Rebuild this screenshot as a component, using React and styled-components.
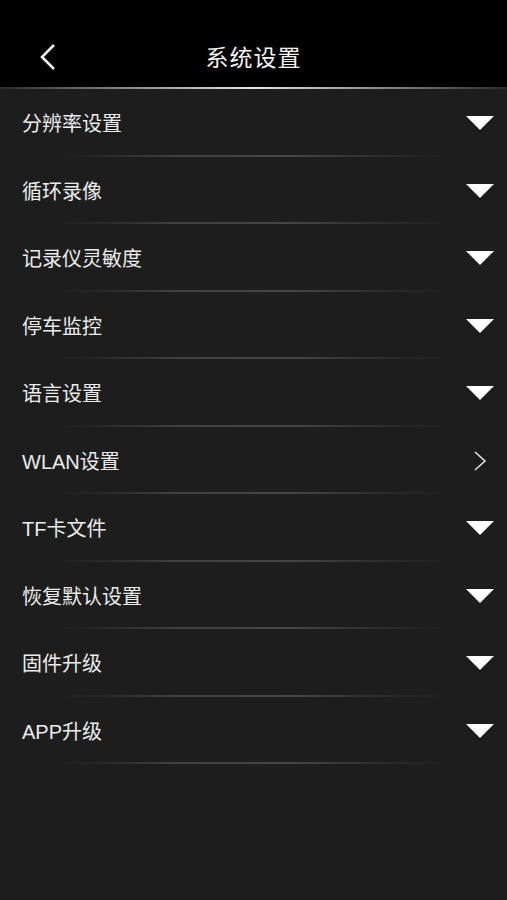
import React from "react";
import styled, { createGlobalStyle } from "styled-components";

const GlobalStyle = createGlobalStyle`
  html, body {
    margin: 0;
    padding: 0;
    background: #1d1d1d;
  }
  body {
    font-family: "Noto Sans CJK SC", "Liberation Sans", sans-serif;
  }
`;

const Page = styled.div`
  width: 507px;
  min-height: 900px;
  background: #1d1d1d;
  display: flex;
  flex-direction: column;
`;

const Header = styled.header`
  height: 87px;
  background: #000;
  display: flex;
  align-items: center;
  justify-content: center;
  position: relative;
  padding-top: 26px;
  box-sizing: border-box;
`;

const Glow = styled.div`
  height: 2px;
  background: linear-gradient(
    to right,
    #2a2a2a 0%,
    #777 20%,
    #e6e6e6 50%,
    #777 80%,
    #2a2a2a 100%
  );
`;

const BackButton = styled.button`
  position: absolute;
  left: 36px;
  top: 42px;
  width: 24px;
  height: 30px;
  padding: 0;
  border: none;
  background: none;
  display: flex;
  align-items: center;
  justify-content: center;
`;

const Title = styled.h1`
  margin: 0;
  color: #f2f2f2;
  font-size: 23px;
  font-weight: 400;
  letter-spacing: 1px;
  line-height: 1;
`;

const List = styled.ul`
  list-style: none;
  margin: 0;
  padding: 0;
`;

const Row = styled.li`
  height: 67.5px;
  box-sizing: border-box;
  display: flex;
  align-items: center;
  justify-content: space-between;
  padding: 1px 13px 0 22px;
  position: relative;

  &::after {
    content: "";
    position: absolute;
    left: 60px;
    right: 60px;
    bottom: 0;
    height: 2px;
    background: linear-gradient(
      to right,
      rgba(70, 70, 70, 0) 0%,
      #404040 30%,
      #454545 60%,
      rgba(70, 70, 70, 0) 100%
    );
  }
`;

const Label = styled.span`
  color: #ececec;
  font-size: 20px;
  line-height: 1;
  padding-top: 2px;
  font-family: "Liberation Sans", "Noto Sans CJK SC", sans-serif;
`;

const Caret = styled.span`
  width: 0;
  height: 0;
  border-left: 14px solid transparent;
  border-right: 14px solid transparent;
  border-top: 14px solid #fff;
`;

const ArrowBox = styled.span`
  width: 28px;
  display: flex;
  justify-content: center;
`;

const items = [
  { label: "分辨率设置", kind: "drop" },
  { label: "循环录像", kind: "drop" },
  { label: "记录仪灵敏度", kind: "drop" },
  { label: "停车监控", kind: "drop" },
  { label: "语言设置", kind: "drop" },
  { label: "WLAN设置", kind: "link" },
  { label: "TF卡文件", kind: "drop" },
  { label: "恢复默认设置", kind: "drop" },
  { label: "固件升级", kind: "drop" },
  { label: "APP升级", kind: "drop" },
];

function App() {
  return (
    <Page>
      <GlobalStyle />
      <Header>
        <BackButton aria-label="back">
          <svg width="20" height="28" viewBox="0 0 20 28">
            <path d="M16 2 L4 14 L16 26" fill="none" stroke="#f0f0f0" strokeWidth="2.6" />
          </svg>
        </BackButton>
        <Title>系统设置</Title>
      </Header>
      <Glow />
      <List>
        {items.map((item) => (
          <Row key={item.label}>
            <Label>{item.label}</Label>
            <ArrowBox>
              {item.kind === "drop" ? (
                <Caret />
              ) : (
                <svg width="14" height="22" viewBox="0 0 14 22">
                  <path d="M2 2 L12 11 L2 20" fill="none" stroke="#e0e0e0" strokeWidth="1.6" />
                </svg>
              )}
            </ArrowBox>
          </Row>
        ))}
      </List>
    </Page>
  );
}

export default App;
